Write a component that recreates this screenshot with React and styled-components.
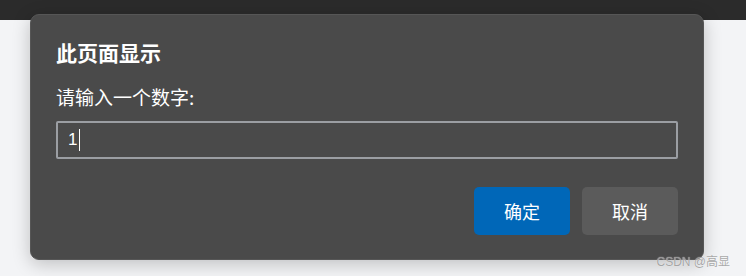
import styled, { createGlobalStyle } from "styled-components";

const GlobalStyle = createGlobalStyle`
  html, body {
    margin: 0;
    padding: 0;
    background: #f3f4f6;
  }
  body {
    font-family: "Noto Sans CJK SC", "Noto Sans", sans-serif;
    width: 746px;
    height: 276px;
    overflow: hidden;
  }
`;

const Page = styled.div`
  position: relative;
  width: 746px;
  height: 276px;
  background: #f3f4f6;
`;

const TopBar = styled.div`
  height: 20px;
  background: #2b2b2b;
`;

const Dialog = styled.div`
  position: absolute;
  left: 30px;
  top: 14px;
  width: 674px;
  height: 246px;
  box-sizing: border-box;
  padding: 24px 25px 24px;
  background: #4a4a4a;
  border: 1px solid #565656;
  border-radius: 9px;
  box-shadow: 0 4px 18px rgba(0, 0, 0, 0.22);
  display: flex;
  flex-direction: column;
  color: #ffffff;
`;

const Title = styled.h2`
  margin: 0;
  font-size: 21px;
  font-weight: 700;
  line-height: 26px;
`;

const Message = styled.div`
  margin-top: 20px;
  font-size: 19px;
  line-height: 24px;
`;

const Field = styled.div`
  margin-top: 12px;
  height: 40px;
  box-sizing: border-box;
  border: 2px solid #9b9ea3;
  border-radius: 2px;
  padding: 0 10px;
  display: flex;
  align-items: center;
  font-family: "Liberation Sans", "Noto Sans", sans-serif;
  font-size: 17px;
`;

const Caret = styled.span`
  display: inline-block;
  width: 1px;
  height: 22px;
  margin-left: 2px;
  background: #ffffff;
`;

const Actions = styled.div`
  margin-top: 28px;
  display: flex;
  justify-content: flex-end;
  gap: 12px;
`;

const Button = styled.button`
  width: 96px;
  height: 48px;
  border: none;
  border-radius: 5px;
  background: ${(p) => (p.$primary ? "#0067b8" : "#5b5b5b")};
  color: #ffffff;
  font-family: "Noto Sans CJK SC", sans-serif;
  font-size: 18px;
  line-height: 1;
  padding: 0;
  cursor: pointer;
`;

const Watermark = styled.div`
  position: absolute;
  right: 16px;
  bottom: 7px;
  font-family: "Liberation Sans", "Noto Sans CJK SC", sans-serif;
  font-size: 12px;
  color: rgba(140, 140, 140, 0.75);
  text-shadow: 0 0 1px rgba(255, 255, 255, 0.8);
`;

export default function App() {
  return (
    <>
      <GlobalStyle />
      <Page>
        <TopBar />
        <Dialog>
          <Title>此页面显示</Title>
          <Message>请输入一个数字:</Message>
          <Field>
            1<Caret />
          </Field>
          <Actions>
            <Button $primary>确定</Button>
            <Button>取消</Button>
          </Actions>
        </Dialog>
        <Watermark>CSDN @高显</Watermark>
      </Page>
    </>
  );
}
